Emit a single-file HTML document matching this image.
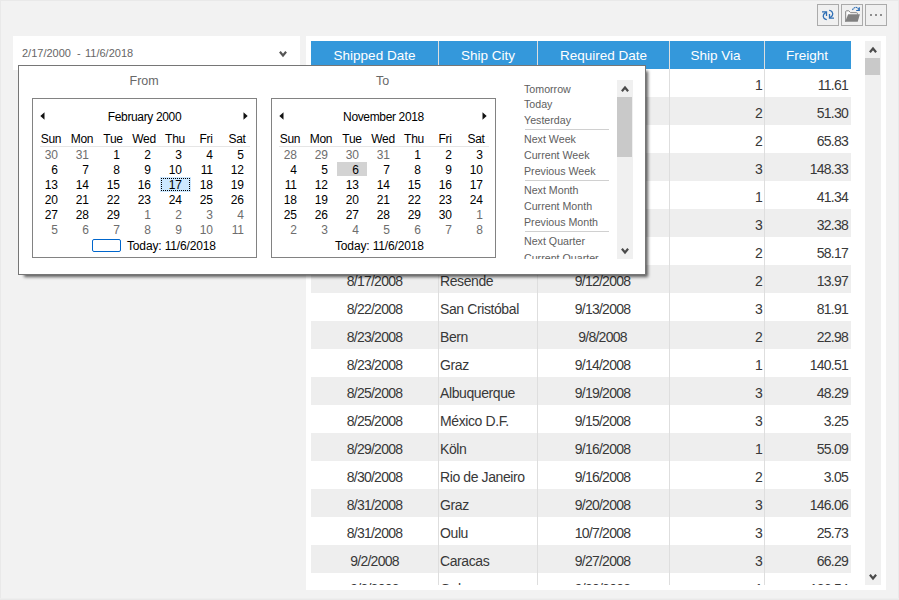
<!DOCTYPE html>
<html lang="en"><head><meta charset="utf-8"><title>Date range filter</title>
<style>
html,body{margin:0;padding:0}
body{width:899px;height:600px;overflow:hidden;background:#f2f2f2;position:relative;font-family:"Liberation Sans",Arial,sans-serif;}
div,span,svg{position:absolute;box-sizing:border-box}
.edge{background:#e9e9e9}
.btn{width:22px;height:22px;top:4px;border:1px solid #ababab;background:#f0f0f0}
.panel{background:#fff}
.dot{position:absolute;top:9px;width:2px;height:2px;background:#8e8e8e}
#hdr{left:311px;top:41px;width:540px;height:28px;background:#3498db;color:#fff;font-size:13.5px;line-height:30px}
#hdr span{top:0px;height:28px;text-align:center;white-space:nowrap}
#hdr i{position:absolute;top:0;width:1px;height:28px;background:#dedede}
#rows{left:311px;top:41px;width:540px;height:544px;overflow:hidden;font-size:14px;color:#383838;line-height:30px;letter-spacing:-0.75px}
#rows>div{left:0;width:540px;height:28px}
#rows>div.alt{background:#eeeeee}
#rows span{top:0.5px;height:28px;white-space:nowrap}
.c1{left:0;width:127px;text-align:center}
.c2{left:129px;width:96px;text-align:left;letter-spacing:-0.4px}
.c3{left:226px;width:131px;text-align:center}
.c4{left:359px;width:92px;text-align:right}
.c5{left:454px;width:83px;text-align:right}
.vl{top:69px;width:1px;height:516px;background:#dedede}
.sb{background:#f0f0f0}
.th{background:#c9c9c9}
#pop{left:18px;top:65px;width:628px;height:210px;background:#fff;border:1px solid #767676;box-shadow:4px 4px 3px -2px rgba(0,0,0,.62)}
.cal{width:225px;height:160px;border:1px solid #828282;background:#fff}
.ct{text-align:center;letter-spacing:-0.35px;font-size:12px;line-height:15px;color:#000;height:15px}
.dn{width:31px;text-align:center;letter-spacing:-0.3px;font-size:12px;line-height:15px;height:15px;color:#000}
.d{width:31px;padding-right:8.9px;letter-spacing:-0.3px;text-align:right;font-size:12px;line-height:15px;height:15px;color:#000}
.d.g{color:#6d6d6d}
.sepd{width:210px;height:1px;background:#e6e6e6}
.sel1b{width:31px;height:15px;background:#cde8ff}
.sel1{width:29px;height:13px;background:#cce8ff;border:1px dotted #000}
.sel2{width:30px;height:14px;background:#d3d3d3}
.tb{width:29px;height:13px;border:1px solid #0066cc;border-radius:2px;background:#fff}
.td{letter-spacing:-0.15px;font-size:12px;line-height:15px;height:15px;color:#000;white-space:nowrap}
.lbl{font-size:11px;color:#666;line-height:14px;white-space:nowrap}
#list{left:517px;top:80px;width:100px;height:179px;overflow:hidden}
.li{left:7px;font-size:10.67px;line-height:14px;height:14px;color:#606060;white-space:nowrap}
.ls{left:8px;width:84px;height:1px;background:#d0d0d0}
</style></head><body>
<div class="edge" style="left:0;top:0;width:1px;height:600px"></div>
<div class="edge" style="left:898px;top:0;width:1px;height:600px"></div>
<div class="edge" style="left:0;top:598px;width:899px;height:1px;background:#eeeeee"></div><div class="edge" style="left:0;top:599px;width:899px;height:1px"></div>
<div class="edge" style="left:0;top:0;width:899px;height:1px"></div>

<div class="btn" style="left:817px"><svg style="left:0;top:0" width="20" height="20" viewBox="0 0 20 20" fill="none" stroke="#2f6fb5" stroke-width="1.3"><path d="M4 6.8H8.5V11"/><path d="M8 7.4C5.5 8.6 4.4 11 6 13.2C6.8 14.1 7.8 14.5 8.8 14.6"/><path d="M16 13.2H11.5V9"/><path d="M12 12.6C14.5 11.4 15.6 9 14 6.8C13.2 5.9 12.2 5.5 11.2 5.4"/></svg></div>
<div class="btn" style="left:841px"><svg style="left:0;top:0" width="20" height="20" viewBox="0 0 20 20"><path d="M3.7 16.5V5.8H6.7L8.6 7.7H15.4V16.5Z" fill="#fdfdfd"/><path d="M3.7 16.8V6.6Q3.7 5.8 4.5 5.8H6.7L8.6 7.7H14.6Q15.4 7.7 15.4 8.5V9.6" fill="none" stroke="#808080" stroke-width="1"/><path d="M6.1 9.3H17.9L15.7 16.8H3.2Z" fill="#808080"/><path d="M10.4 4.9C11.8 2.7 13.4 2 14.8 2.5C15.7 2.9 16.4 3.6 16.9 4.5" fill="none" stroke="#2f6fb5" stroke-width="1.1" stroke-dasharray="1.6 0.5"/><path d="M17.9 2.3V5.9H14.2V5L16.2 4.8L17 2.3Z" fill="#2f6fb5"/></svg></div>
<div class="btn" style="left:865px"><i class="dot" style="left:4px"></i><i class="dot" style="left:9px"></i><i class="dot" style="left:14px"></i></div>

<div class="panel" style="left:13px;top:36px;width:287px;height:34px"></div>
<div class="lbl" style="left:22px;top:46px">2/17/2000</div>
<div class="lbl" style="left:77px;top:46px">-</div>
<div class="lbl" style="left:85px;top:46px">11/6/2018</div>
<svg style="left:276.5px;top:47.8px" width="12" height="12" viewBox="-6 -6 12 12"><path d="M-3.1 -2.2L0 1.5L3.1 -2.2" fill="none" stroke="#555" stroke-width="2.2"/></svg>

<div class="panel" style="left:306px;top:36px;width:580px;height:554px"></div>
<div id="rows">
<div style="top:28px"><span class="c1">8/10/2008</span><span class="c2">Münster</span><span class="c3">9/2/2008</span><span class="c4">1</span><span class="c5">11.61</span></div>
<div class="alt" style="top:56px"><span class="c1">8/11/2008</span><span class="c2">Charleroi</span><span class="c3">9/5/2008</span><span class="c4">2</span><span class="c5">51.30</span></div>
<div style="top:84px"><span class="c1">8/12/2008</span><span class="c2">Rio de Janeiro</span><span class="c3">9/5/2008</span><span class="c4">2</span><span class="c5">65.83</span></div>
<div class="alt" style="top:112px"><span class="c1">8/15/2008</span><span class="c2">Genève</span><span class="c3">9/9/2008</span><span class="c4">3</span><span class="c5">148.33</span></div>
<div style="top:140px"><span class="c1">8/15/2008</span><span class="c2">Lyon</span><span class="c3">9/5/2008</span><span class="c4">1</span><span class="c5">41.34</span></div>
<div class="alt" style="top:168px"><span class="c1">8/16/2008</span><span class="c2">Reims</span><span class="c3">9/1/2008</span><span class="c4">3</span><span class="c5">32.38</span></div>
<div style="top:196px"><span class="c1">8/16/2008</span><span class="c2">Rio de Janeiro</span><span class="c3">8/24/2008</span><span class="c4">2</span><span class="c5">58.17</span></div>
<div class="alt" style="top:224px"><span class="c1">8/17/2008</span><span class="c2">Resende</span><span class="c3">9/12/2008</span><span class="c4">2</span><span class="c5">13.97</span></div>
<div style="top:252px"><span class="c1">8/22/2008</span><span class="c2">San Cristóbal</span><span class="c3">9/13/2008</span><span class="c4">3</span><span class="c5">81.91</span></div>
<div class="alt" style="top:280px"><span class="c1">8/23/2008</span><span class="c2">Bern</span><span class="c3">9/8/2008</span><span class="c4">2</span><span class="c5">22.98</span></div>
<div style="top:308px"><span class="c1">8/23/2008</span><span class="c2">Graz</span><span class="c3">9/14/2008</span><span class="c4">1</span><span class="c5">140.51</span></div>
<div class="alt" style="top:336px"><span class="c1">8/25/2008</span><span class="c2">Albuquerque</span><span class="c3">9/19/2008</span><span class="c4">3</span><span class="c5">48.29</span></div>
<div style="top:364px"><span class="c1">8/25/2008</span><span class="c2">México D.F.</span><span class="c3">9/15/2008</span><span class="c4">3</span><span class="c5">3.25</span></div>
<div class="alt" style="top:392px"><span class="c1">8/29/2008</span><span class="c2">Köln</span><span class="c3">9/16/2008</span><span class="c4">1</span><span class="c5">55.09</span></div>
<div style="top:420px"><span class="c1">8/30/2008</span><span class="c2">Rio de Janeiro</span><span class="c3">9/16/2008</span><span class="c4">2</span><span class="c5">3.05</span></div>
<div class="alt" style="top:448px"><span class="c1">8/31/2008</span><span class="c2">Graz</span><span class="c3">9/20/2008</span><span class="c4">3</span><span class="c5">146.06</span></div>
<div style="top:476px"><span class="c1">8/31/2008</span><span class="c2">Oulu</span><span class="c3">10/7/2008</span><span class="c4">3</span><span class="c5">25.73</span></div>
<div class="alt" style="top:504px"><span class="c1">9/2/2008</span><span class="c2">Caracas</span><span class="c3">9/27/2008</span><span class="c4">3</span><span class="c5">66.29</span></div>
<div style="top:532px"><span class="c1">9/3/2008</span><span class="c2">Oulu</span><span class="c3">9/30/2008</span><span class="c4">1</span><span class="c5">136.54</span></div>
</div>
<div id="hdr"><span style="left:0;width:127px">Shipped Date</span><i style="left:127px"></i><span style="left:128px;width:98px">Ship City</span><i style="left:226px"></i><span style="left:227px;width:131px">Required Date</span><i style="left:358px"></i><span style="left:357.5px;width:94px">Ship Via</span><i style="left:453px"></i><span style="left:453px;width:86px">Freight</span></div>
<div class="vl" style="left:438px"></div><div class="vl" style="left:537px"></div><div class="vl" style="left:669px"></div><div class="vl" style="left:764px"></div>

<div class="sb" style="left:865px;top:41px;width:16px;height:544px"></div>
<div class="th" style="left:865px;top:58px;width:15px;height:17px"></div>
<svg style="left:866.6px;top:44.2px" width="12" height="12" viewBox="-6 -6 12 12"><path d="M-3.1 2.2L0 -1.5L3.1 2.2" fill="none" stroke="#4a4a4a" stroke-width="2.2"/></svg>
<svg style="left:866.6px;top:571px" width="12" height="12" viewBox="-6 -6 12 12"><path d="M-3.1 -2.2L0 1.5L3.1 -2.2" fill="none" stroke="#4a4a4a" stroke-width="2.2"/></svg>

<div id="pop"></div>
<div class="lbl" style="left:129.5px;top:73.5px;font-size:12.5px;color:#686868">From</div>
<div class="lbl" style="left:376px;top:73.5px;font-size:12.5px;color:#686868">To</div>
<div class="cal" style="left:32px;top:98px"></div>
<svg class="a" style="left:40.4px;top:111.5px" width="5" height="8" viewBox="0 0 5 8"><path d="M4.5 0.2 L0.3 4 L4.5 7.8 Z" fill="#111"/></svg>
<svg class="a" style="left:243.4px;top:111.5px" width="5" height="8" viewBox="0 0 5 8"><path d="M0.5 0.2 L4.7 4 L0.5 7.8 Z" fill="#111"/></svg>
<div class="ct" style="left:32px;top:110px;width:225px">February 2000</div>
<div class="dn" style="left:35.5px;top:132px">Sun</div>
<div class="dn" style="left:66.5px;top:132px">Mon</div>
<div class="dn" style="left:97.5px;top:132px">Tue</div>
<div class="dn" style="left:128.5px;top:132px">Wed</div>
<div class="dn" style="left:159.5px;top:132px">Thu</div>
<div class="dn" style="left:190.5px;top:132px">Fri</div>
<div class="dn" style="left:221.5px;top:132px">Sat</div>
<div class="sepd" style="left:40px;top:146px"></div>
<div class="d g" style="left:35.5px;top:148px">30</div>
<div class="d g" style="left:66.5px;top:148px">31</div>
<div class="d" style="left:97.5px;top:148px">1</div>
<div class="d" style="left:128.5px;top:148px">2</div>
<div class="d" style="left:159.5px;top:148px">3</div>
<div class="d" style="left:190.5px;top:148px">4</div>
<div class="d" style="left:221.5px;top:148px">5</div>
<div class="d" style="left:35.5px;top:163px">6</div>
<div class="d" style="left:66.5px;top:163px">7</div>
<div class="d" style="left:97.5px;top:163px">8</div>
<div class="d" style="left:128.5px;top:163px">9</div>
<div class="d" style="left:159.5px;top:163px">10</div>
<div class="d" style="left:190.5px;top:163px">11</div>
<div class="d" style="left:221.5px;top:163px">12</div>
<div class="d" style="left:35.5px;top:178px">13</div>
<div class="d" style="left:66.5px;top:178px">14</div>
<div class="d" style="left:97.5px;top:178px">15</div>
<div class="d" style="left:128.5px;top:178px">16</div>
<div class="sel1b" style="left:160px;top:177px"></div><div class="sel1" style="left:161px;top:178px"></div>
<div class="d" style="left:159.5px;top:178px">17</div>
<div class="d" style="left:190.5px;top:178px">18</div>
<div class="d" style="left:221.5px;top:178px">19</div>
<div class="d" style="left:35.5px;top:193px">20</div>
<div class="d" style="left:66.5px;top:193px">21</div>
<div class="d" style="left:97.5px;top:193px">22</div>
<div class="d" style="left:128.5px;top:193px">23</div>
<div class="d" style="left:159.5px;top:193px">24</div>
<div class="d" style="left:190.5px;top:193px">25</div>
<div class="d" style="left:221.5px;top:193px">26</div>
<div class="d" style="left:35.5px;top:208px">27</div>
<div class="d" style="left:66.5px;top:208px">28</div>
<div class="d" style="left:97.5px;top:208px">29</div>
<div class="d g" style="left:128.5px;top:208px">1</div>
<div class="d g" style="left:159.5px;top:208px">2</div>
<div class="d g" style="left:190.5px;top:208px">3</div>
<div class="d g" style="left:221.5px;top:208px">4</div>
<div class="d g" style="left:35.5px;top:223px">5</div>
<div class="d g" style="left:66.5px;top:223px">6</div>
<div class="d g" style="left:97.5px;top:223px">7</div>
<div class="d g" style="left:128.5px;top:223px">8</div>
<div class="d g" style="left:159.5px;top:223px">9</div>
<div class="d g" style="left:190.5px;top:223px">10</div>
<div class="d g" style="left:221.5px;top:223px">11</div>
<div class="tb" style="left:92px;top:239px"></div>
<div class="td" style="left:127px;top:239px">Today: 11/6/2018</div>
<div class="cal" style="left:271px;top:98px"></div>
<svg class="a" style="left:279.4px;top:111.5px" width="5" height="8" viewBox="0 0 5 8"><path d="M4.5 0.2 L0.3 4 L4.5 7.8 Z" fill="#111"/></svg>
<svg class="a" style="left:482.4px;top:111.5px" width="5" height="8" viewBox="0 0 5 8"><path d="M0.5 0.2 L4.7 4 L0.5 7.8 Z" fill="#111"/></svg>
<div class="ct" style="left:271px;top:110px;width:225px">November 2018</div>
<div class="dn" style="left:274.5px;top:132px">Sun</div>
<div class="dn" style="left:305.5px;top:132px">Mon</div>
<div class="dn" style="left:336.5px;top:132px">Tue</div>
<div class="dn" style="left:367.5px;top:132px">Wed</div>
<div class="dn" style="left:398.5px;top:132px">Thu</div>
<div class="dn" style="left:429.5px;top:132px">Fri</div>
<div class="dn" style="left:460.5px;top:132px">Sat</div>
<div class="sepd" style="left:279px;top:146px"></div>
<div class="d g" style="left:274.5px;top:148px">28</div>
<div class="d g" style="left:305.5px;top:148px">29</div>
<div class="d g" style="left:336.5px;top:148px">30</div>
<div class="d g" style="left:367.5px;top:148px">31</div>
<div class="d" style="left:398.5px;top:148px">1</div>
<div class="d" style="left:429.5px;top:148px">2</div>
<div class="d" style="left:460.5px;top:148px">3</div>
<div class="d" style="left:274.5px;top:163px">4</div>
<div class="d" style="left:305.5px;top:163px">5</div>
<div class="sel2" style="left:337px;top:162px"></div>
<div class="d" style="left:336.5px;top:163px">6</div>
<div class="d" style="left:367.5px;top:163px">7</div>
<div class="d" style="left:398.5px;top:163px">8</div>
<div class="d" style="left:429.5px;top:163px">9</div>
<div class="d" style="left:460.5px;top:163px">10</div>
<div class="d" style="left:274.5px;top:178px">11</div>
<div class="d" style="left:305.5px;top:178px">12</div>
<div class="d" style="left:336.5px;top:178px">13</div>
<div class="d" style="left:367.5px;top:178px">14</div>
<div class="d" style="left:398.5px;top:178px">15</div>
<div class="d" style="left:429.5px;top:178px">16</div>
<div class="d" style="left:460.5px;top:178px">17</div>
<div class="d" style="left:274.5px;top:193px">18</div>
<div class="d" style="left:305.5px;top:193px">19</div>
<div class="d" style="left:336.5px;top:193px">20</div>
<div class="d" style="left:367.5px;top:193px">21</div>
<div class="d" style="left:398.5px;top:193px">22</div>
<div class="d" style="left:429.5px;top:193px">23</div>
<div class="d" style="left:460.5px;top:193px">24</div>
<div class="d" style="left:274.5px;top:208px">25</div>
<div class="d" style="left:305.5px;top:208px">26</div>
<div class="d" style="left:336.5px;top:208px">27</div>
<div class="d" style="left:367.5px;top:208px">28</div>
<div class="d" style="left:398.5px;top:208px">29</div>
<div class="d" style="left:429.5px;top:208px">30</div>
<div class="d g" style="left:460.5px;top:208px">1</div>
<div class="d g" style="left:274.5px;top:223px">2</div>
<div class="d g" style="left:305.5px;top:223px">3</div>
<div class="d g" style="left:336.5px;top:223px">4</div>
<div class="d g" style="left:367.5px;top:223px">5</div>
<div class="d g" style="left:398.5px;top:223px">6</div>
<div class="d g" style="left:429.5px;top:223px">7</div>
<div class="d g" style="left:460.5px;top:223px">8</div>
<div class="td" style="left:335px;top:239px">Today: 11/6/2018</div>
<div id="list">
<div class="li" style="top:2.0px">Tomorrow</div>
<div class="li" style="top:17.0px">Today</div>
<div class="li" style="top:33.0px">Yesterday</div>
<div class="li" style="top:51.5px">Next Week</div>
<div class="li" style="top:67.5px">Current Week</div>
<div class="li" style="top:84.0px">Previous Week</div>
<div class="li" style="top:102.5px">Next Month</div>
<div class="li" style="top:118.5px">Current Month</div>
<div class="li" style="top:135.2px">Previous Month</div>
<div class="li" style="top:154.2px">Next Quarter</div>
<div class="li" style="top:170.6px">Current Quarter</div>
<div class="ls" style="top:49px"></div>
<div class="ls" style="top:100px"></div>
<div class="ls" style="top:151px"></div>
</div>
<div class="sb" style="left:617px;top:80px;width:16px;height:179px"></div>
<div class="th" style="left:617px;top:97px;width:15px;height:60px"></div>
<svg style="left:618.6px;top:82.8px" width="12" height="12" viewBox="-6 -6 12 12"><path d="M-3.1 2.2L0 -1.5L3.1 2.2" fill="none" stroke="#4a4a4a" stroke-width="2.2"/></svg>
<svg style="left:618.7px;top:244.7px" width="12" height="12" viewBox="-6 -6 12 12"><path d="M-3.1 -2.2L0 1.5L3.1 -2.2" fill="none" stroke="#4a4a4a" stroke-width="2.2"/></svg>
</body></html>
